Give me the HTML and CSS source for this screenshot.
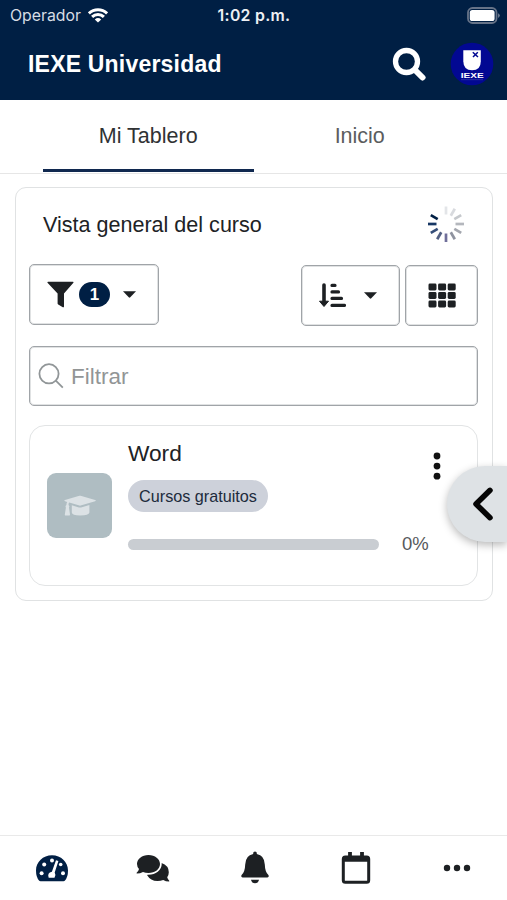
FILE: index.html
```html
<!DOCTYPE html>
<html lang="es">
<head>
<meta charset="utf-8">
<meta name="viewport" content="width=device-width, initial-scale=1">
<title>IEXE Universidad</title>
<link rel="stylesheet" href="styles.css">
</head>
<body>
<div class="app">
  <header class="header">
    <div class="status">
      <div class="carrier"><span>Operador</span>
        <svg width="20" height="15" viewBox="0 0 20 15" fill="none" stroke="#fff" stroke-width="3"><path d="M.9 5.4a13 13 0 0 1 18.2 0M4.1 8.900a8.400 8.400 0 0 1 11.800 0"/><path d="M10 14.600 6.800 11.400a4.700 4.700 0 0 1 6.400 0z" fill="#fff" stroke="none"/></svg>
      </div>
      <span class="time">1:02 p.m.</span>
      <svg class="battery" width="34" height="18" viewBox="0 0 34 18"><rect x="1" y="1" width="28.500" height="15" rx="4.500" fill="none" stroke="#667388" stroke-width="1.800"/><rect x="2.800" y="3" width="24.800" height="11" rx="2.600" fill="#fff"/><path d="M31.200 6.200q3 2.200 0 4.700z" fill="#7d899c"/></svg>
    </div>
    <div class="titlebar">
      <h1>IEXE Universidad</h1>
      <svg class="find" width="34" height="34" viewBox="0 0 34 34" fill="none" stroke="#fff"><circle cx="14.500" cy="14.500" r="11" stroke-width="5.300"/><path d="m23 23 7.500 7.500" stroke-width="6" stroke-linecap="round"/></svg>
      <svg class="avatar" width="44" height="44" viewBox="0 0 44 44"><circle cx="22" cy="22" r="21.300" fill="#020892"/><path d="M13.300 8.300h17.500v11q0 9-8.700 9t-8.800-9z" fill="#fff"/><path d="m22.800 10.200 5.200 4.800m-.2-4.800L23 15" stroke="#020892" stroke-width="1.500"/><text x="10.700" y="35.800" textLength="23" lengthAdjust="spacingAndGlyphs" class="logo-text">IEXE</text><path d="M11 37.700h22" stroke="#3a3fa8" stroke-width=".7"/></svg>
    </div>
  </header>
  <nav class="tabs"><a class="tab active">Mi Tablero</a><a class="tab">Inicio</a></nav>
  <main class="content">
    <section class="overview">
      <div class="heading"><h2>Vista general del curso</h2>
        <svg width="38" height="38" viewBox="-19 -19 38 38" stroke-width="2.700"><path d="M0-9.500v-8" stroke="#e3e5e8"/><path d="m4.800-8.300 4-6.900" stroke="#d8dade"/><path d="m8.300-4.800 6.900-4" stroke="#c5c8cc"/><path d="M9.500 0h8.500" stroke="#b4b7bd"/><path d="m8.300 4.800 6.900 4" stroke="#a3a6ae"/><path d="m4.800 8.300 4 6.900" stroke="#8e929f"/><path d="M0 9.500v8.500" stroke="#706f9a"/><path d="m-4.800 8.300-4 6.900" stroke="#536083"/><path d="m-8.300 4.800-6.900 4" stroke="#354e79"/><path d="M-9.500 0H-18" stroke="#173764"/><path d="m-8.300-4.800-6.900-4" stroke="#001f44"/></svg>
      </div>
      <div class="toolbar">
        <button class="btn filter"><svg width="27" height="27" viewBox="0 0 27 27"><path d="M1.200.8h24.600q1.200 0 .6 1L17 12.600v12.800q0 1.300-1.200.8l-4.600-2.600q-.6-.4-.6-1V12.600L.5 1.800Q0 .8 1.200.8z" fill="#1d2023"/></svg><span class="count">1</span><svg class="caret" width="13" height="7" viewBox="0 0 12 7" preserveAspectRatio="none"><path d="M0 .2h12L6.700 6.300q-.7.7-1.400 0z" fill="#1d2023"/></svg></button>
        <button class="btn sort"><svg width="27" height="26" viewBox="0 0 27 26" stroke="#1d2023" fill="#1d2023"><path d="M5 2v18.500" stroke-width="3.600" stroke-linecap="round"/><path d="M.5 18.200h9L5 23.500z" stroke-width="1" stroke-linejoin="round"/><path d="M13 2.400h3M13 8.900h6.500M13 15.400h9.500M13 22.400h12.500" stroke-width="3.200" stroke-linecap="round"/></svg><svg class="caret" width="13" height="7" viewBox="0 0 12 7" preserveAspectRatio="none"><path d="M0 .2h12L6.700 6.300q-.7.7-1.400 0z" fill="#1d2023"/></svg></button>
        <button class="btn grid"><svg width="28" height="25" viewBox="0 0 28 25" fill="#1d2023"><rect x=".5" y=".5" width="8" height="7" rx="1.400"/><rect x="10.100" y=".5" width="8" height="7" rx="1.400"/><rect x="19.700" y=".5" width="8" height="7" rx="1.400"/><rect x=".5" y="9" width="8" height="7" rx="1.400"/><rect x="10.100" y="9" width="8" height="7" rx="1.400"/><rect x="19.700" y="9" width="8" height="7" rx="1.400"/><rect x=".5" y="17.500" width="8" height="7" rx="1.400"/><rect x="10.100" y="17.500" width="8" height="7" rx="1.400"/><rect x="19.700" y="17.500" width="8" height="7" rx="1.400"/></svg></button>
      </div>
      <div class="search"><svg width="26" height="26" viewBox="0 0 26 26" fill="none" stroke="#919698" stroke-width="1.800"><circle cx="11" cy="10.800" r="9.600"/><path d="m17.800 17.600 7 7"/></svg><span>Filtrar</span></div>
      <article class="course">
        <div class="thumb"><svg width="34" height="22" viewBox="0 0 34 22" fill="#dce2e5"><path d="M16.400.8q.6-.2 1.200 0l14.500 4.100q1.600.7 0 1.400l-14.500 4.300q-.6.2-1.200 0L6.300 7.600q-.8.5-.8 2.300 1.400 1.300.5 2.500l1 7.400q0 .6-.6.6H2.300q-.6 0-.5-.6l1.100-7.400q-1-1.300.5-2.500.1-1.800.8-3l-2.200-.6q-1.500-.8 0-1.400z"/><path d="m8.800 10.200 7.100 2.200q1.100.4 2.200 0l8.300-2.500v7.600q-.5 2.800-9.200 3-8.200-.1-8.400-3z"/></svg></div>
        <div class="details">
          <h3>Word</h3>
          <span class="category">Cursos gratuitos</span>
          <div class="progress"><div class="track"></div><span>0%</span></div>
        </div>
        <svg class="more" width="8" height="28" viewBox="0 0 8 28" fill="#111"><circle cx="4" cy="4" r="3.400"/><circle cx="4" cy="14.100" r="3.400"/><circle cx="4" cy="24.200" r="3.400"/></svg>
      </article>
    </section>
  </main>
  <footer class="bottombar">
    <a><svg width="34" height="28" viewBox="0 0 34 28"><path d="M4 26.500Q1 23 1 16.500C1 8 8 1.300 17 1.300S33 8 33 16.500q0 6.500-3 10-.5.700-1.500.7h-23Q4.500 27.200 4 26.500z" fill="#001f44"/><g fill="#fff"><circle cx="6.600" cy="19.200" r="2"/><circle cx="9.200" cy="10.500" r="2"/><circle cx="17" cy="6.500" r="2"/><circle cx="25.700" cy="10.500" r="1.800"/><circle cx="28" cy="19.200" r="2"/><path d="m21 6.200 2.400.8-3.700 11.400q1.600 2.400-.2 5.300h-5.800q-1.800-4.800 3.200-6z"/></g></svg></a>
    <a><svg width="34" height="28" viewBox="0 0 34 28" fill="#1d2023"><path d="M25.500 9q7.300 2.500 7.300 9.300 0 2.900-1.600 5 .5 1.800 1.900 3.200.6.900-.2 1-3 0-5.700-1.500-2.500 1-5.700 1-7 0-10.500-6z"/><path d="M12.500 1C19 1 24 5 24 10s-5 9-11.500 9q-3 0-5.500-1-3 1.500-6 1.500-.9-.2-.2-1Q2.500 17 3 15q-2-2.200-2-5c0-5 5-9 11.500-9z" stroke="#fff" stroke-width="3.400" paint-order="stroke"/></svg></a>
    <a><svg width="30" height="34" viewBox="0 0 30 34" fill="#1d2023"><path d="M13.200 3V2q0-1.500 1.800-1.500T16.800 2v1q7.700 1.400 8 10.500.2 7.500 3.600 10.500 1 2-1 2.500H2.600q-2-.5-1-2.500 3.400-3 3.600-10.500.3-9.100 8-10.500z"/><path d="M11 28.800h8q-.8 3.500-4 3.500t-4-3.500z"/></svg></a>
    <a><svg width="30" height="34" viewBox="0 0 30 34" fill="none" stroke="#1d2023"><rect x="2.300" y="6" width="25.400" height="25.300" rx="2" stroke-width="3"/><path d="M2.300 8h25.400" stroke-width="5.500"/><path d="M9 1v6M21 1v6" stroke-width="3.800"/></svg></a>
    <a><svg width="28" height="8" viewBox="0 0 28 8" fill="#1d2023"><circle cx="4" cy="4" r="3.200"/><circle cx="14" cy="4" r="3.200"/><circle cx="24" cy="4" r="3.200"/></svg></a>
  </footer>
  <button class="drawer"><svg width="22" height="34" viewBox="0 0 22 34" fill="none" stroke="#050505" stroke-width="5.500" stroke-linecap="round" stroke-linejoin="round"><path d="M18 3.300 4 17l14 13.700"/></svg></button>
</div>
</body>
</html>
```
FILE: styles.css
```css
* { box-sizing: border-box; }
body { margin: 0; background: #fff; font-family: "Liberation Sans", Arial, sans-serif; color: #202225; }
svg { display: block; flex: none; }
h1, h2, h3 { margin: 0; }
button { padding: 0; font: inherit; }
.app { position: relative; height: 900px; display: flex; flex-direction: column; overflow: hidden; }
.header { height: 100px; background: #001f44; color: #fff; }
.status { height: 30px; padding: 0 6px 0 10px; display: grid; grid-template-columns: 1fr auto 1fr; align-items: center; font: 15.800px/30px Inter, sans-serif; }
.carrier { display: flex; gap: 7px; align-items: center; color: #d7dde5; }
.carrier span, .time { padding-top: 1px; }
.time { font-weight: 600; color: #edf0f4; letter-spacing: .3px; margin-left: -3px; }
.battery { justify-self: end; }
.titlebar { height: 68px; padding: 0 13px 0 28px; display: flex; align-items: center; }
h1 { flex: 1; font-size: 23px; line-height: 28px; letter-spacing: .2px; }
.find { margin-right: 24px; }
.logo-text { font: bold 7.5px "Liberation Sans", sans-serif; fill: #fff; }
.tabs { height: 74px; padding: 0 43px; display: flex; border-bottom: 1px solid #e6e6e6; }
.tab { width: 211px; height: 72px; padding-bottom: 2px; border-bottom: 3px solid transparent; line-height: 72px; text-align: center; font-size: 21.500px; color: #5b5d5e; }
.tab:last-child { padding-left: 2px; }
.tab.active { color: #303234; border-bottom-color: #10284f; }
.content { flex: 1; padding: 13px 14px 0; }
.overview { height: 414px; margin-left: 1px; padding: 0 14px 0 13px; border: 1px solid #e0e2e3; border-radius: 11px; }
.heading { height: 76px; padding: 0 13px 4px 14px; display: flex; align-items: center; justify-content: space-between; }
h2 { font-size: 21.550px; font-weight: 400; line-height: 28px; padding-top: 1px; }
.toolbar { display: flex; gap: 5px; height: 62px; }
.btn { height: 61px; border: 1px solid #a0a4a8; box-shadow: inset 0 0 0 1px #e0e2e3; border-radius: 5px; background: #fff; display: flex; align-items: center; }
.filter { width: 130px; padding-left: 17px; margin-right: auto; }
.count { width: 31px; height: 25px; margin-left: 5px; border-radius: 13px; background: #001f44; color: #fff; font: bold 17px/25px "Liberation Sans", sans-serif; text-align: center; }
.filter .caret { margin-left: 13px; }
.sort, .grid { margin-top: 1px; }
.sort { width: 99px; padding-left: 17px; }
.sort .caret { margin-left: 18px; }
.grid { width: 73px; justify-content: center; }
.search { height: 60px; margin-top: 20px; padding-left: 8px; border: 1px solid #a0a4a8; box-shadow: inset 0 0 0 1px #e0e2e3; border-radius: 5px; display: flex; align-items: center; gap: 7px; font-size: 22.500px; color: #929596; }
.search span { padding-top: 2px; }
.course { height: 161px; margin-top: 19px; padding-left: 17px; border: 1px solid #e2e4e5; border-radius: 16px; display: flex; }
.thumb { width: 65px; height: 65px; margin-top: 47px; border-radius: 9px; background: #afbdc2; display: flex; align-items: center; justify-content: center; }
.details { width: 302px; margin-left: 16px; padding-top: 13px; }
h3 { font-size: 22.700px; font-weight: 400; line-height: 28px; }
.category { display: block; width: 140px; height: 32px; margin-top: 13px; border-radius: 16px; background: #cdd1da; color: #202b3c; text-align: center; font-size: 16.200px; line-height: 33px; }
.progress { height: 26px; margin-top: 19px; display: flex; align-items: center; gap: 23px; font-size: 18.500px; color: #57595c; }
.track { width: 251px; height: 11px; border-radius: 6px; background: #c9cdd2; }
.more { margin: 26px 0 0 3px; }
.bottombar { height: 65px; border-top: 1px solid #e9e9e9; display: flex; }
.bottombar a { flex: 1; display: flex; align-items: center; justify-content: center; padding-left: 2px; }
.drawer { position: absolute; top: 466px; right: 0; width: 60px; height: 76px; padding-left: 25px; border: 0; border-radius: 38px 0 0 38px; background: #dee2e5; box-shadow: 0 3px 9px rgba(0,0,0,.28); }
```
